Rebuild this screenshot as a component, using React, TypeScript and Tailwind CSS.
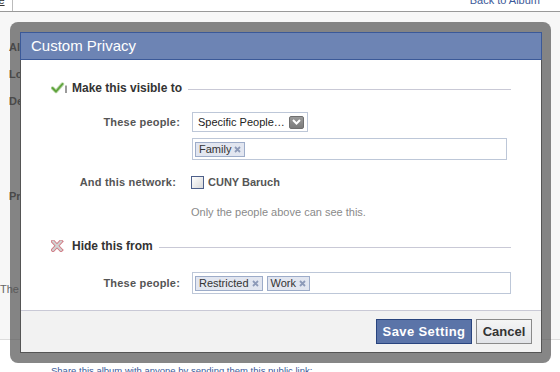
import React from "react";

const CheckIcon = () => (
  <svg width="18" height="12" viewBox="0 0 18 12" className="shrink-0">
    <path d="M1.5 6 L5 9.5 L11.5 2" fill="none" stroke="#b9d6a8" strokeWidth="3.5" strokeLinecap="round" strokeLinejoin="round" />
    <path d="M1.5 6 L5 9.5 L11.5 2" fill="none" stroke="#5ea33b" strokeWidth="1.8" strokeLinecap="round" strokeLinejoin="round" />
    <rect x="14" y="4" width="2" height="7" fill="#9a9a9a" />
    <rect x="14" y="3" width="2" height="1" fill="#cfcfcf" />
  </svg>
);

const CrossIcon = () => (
  <svg width="18" height="12" viewBox="0 0 18 12" className="shrink-0">
    <path d="M2 1.5 L10 10 M10 1.5 L2 10" fill="none" stroke="#d27a84" strokeWidth="4" strokeLinecap="square" />
    <path d="M2 1.5 L10 10 M10 1.5 L2 10" fill="none" stroke="#d2d2d2" strokeWidth="2" strokeLinecap="square" />
  </svg>
);

const TokenX = () => (
  <svg width="7" height="7" viewBox="0 0 7 7" className="shrink-0">
    <path d="M1 1 L6 6 M6 1 L1 6" stroke="#8d9ab8" strokeWidth="1.8" />
  </svg>
);

const Token = ({ label }: { label: string }) => (
  <div className="flex h-[15px] items-center gap-[3px] border border-[#9dacc9] bg-[#e2e6f0] pl-[3px] pr-[3px] leading-[13px] text-[#333]">
    <span>{label}</span>
    <TokenX />
  </div>
);

const Heading = ({ icon, text }: { icon: React.ReactNode; text: string }) => (
  <div className="flex h-[16px] items-center">
    <div className="w-[21px]">{icon}</div>
    <div className="text-[12px] font-bold text-[#333]">{text}</div>
    <div className="ml-[6px] mt-[2px] h-px flex-1 bg-[#c9c9d6]" />
  </div>
);

const Label = ({ children, extra = "" }: { children: React.ReactNode; extra?: string }) => (
  <div className={`w-[129px] shrink-0 text-right font-bold tracking-[0.2px] text-[#555] ${extra}`}>{children}</div>
);

const App = () => {
  return (
    <div className="relative h-[372px] w-[560px] overflow-hidden bg-white font-['Liberation_Sans',Arial,sans-serif] text-[11px]">
      {/* page behind the dialog */}
      <div className="flex h-[12px] justify-between border-b border-[#999]">
        <div className="w-[13px] overflow-hidden border-r border-[#bbb]">
          <span className="-ml-[4px] block -translate-y-[8px] text-[#333] underline">le</span>
        </div>
        <div className="pr-[20px]">
          <span className="block -translate-y-[8px] text-[#3b5998]">Back to Album</span>
        </div>
      </div>
      <div className="flex h-[327px] bg-[#f7f7f7]">
        <div className="flex w-[20px] flex-col overflow-hidden whitespace-nowrap leading-[13px]">
          <div className="ml-[9px] mt-[29px] font-bold text-[#333]">Al</div>
          <div className="ml-[9px] mt-[14px] font-bold text-[#333]">Lo</div>
          <div className="ml-[9px] mt-[14px] font-bold text-[#333]">De</div>
          <div className="ml-[9px] mt-[82px] font-bold text-[#333]">Pr</div>
          <div className="mt-[80px] text-[#666]">The f</div>
        </div>
      </div>
      <div className="border-t border-[#ddd] pl-[51px] pt-[24px] text-[9.5px] leading-[13px] text-[#3b5998]">
        Share this album with anyone by sending them this public link:
      </div>

      {/* dialog overlay */}
      <div className="absolute left-[10px] top-[22px] h-[341px] w-[541px] rounded-[8px] bg-[rgba(82,82,82,0.7)] py-[10px] pl-[10px] pr-[9px]">
        <div className="flex h-full flex-col border-x border-b border-[#555] bg-white">
          <div className="-mx-px flex h-[28px] shrink-0 items-center border border-[#3b5998] bg-[#6d84b4] pl-[10px] text-[15px] text-white">
            Custom Privacy
          </div>

          <div className="flex flex-1 flex-col px-[30px] pt-[20px] leading-[13px]">
            <Heading icon={<CheckIcon />} text="Make this visible to" />

            <div className="mt-[16px] flex items-center">
              <Label>These people:</Label>
              <div className="ml-[12px] flex h-[20px] w-[116px] items-center justify-between border border-[#bdc7d8] pl-[5px] pr-[3px] text-[#222]">
                <span>Specific People…</span>
                <div className="flex h-[13px] w-[15px] items-center justify-center rounded-[2px] border border-[#6f6f6f] bg-linear-to-b from-[#9a9a9a] to-[#7b7b7b]">
                  <svg width="9" height="6" viewBox="0 0 9 6">
                    <path d="M1 1 L4.5 4.5 L8 1" fill="none" stroke="#fff" strokeWidth="2" />
                  </svg>
                </div>
              </div>
            </div>

            <div className="ml-[141px] mt-[6px] flex h-[22px] w-[315px] items-center border border-[#bdc7d8] pl-[2px]">
              <Token label="Family" />
            </div>

            <div className="mt-[16px] flex h-[13px] items-center">
              <Label extra="pr-[4px]">And this network:</Label>
              <div className="ml-[11px] h-[13px] w-[13px] border border-[#4d5f8a] bg-linear-to-br from-white to-[#d8d8d8]" />
              <span className="ml-[4px] font-bold text-[#555]">CUNY Baruch</span>
            </div>

            <div className="ml-[140px] mt-[17px] text-[#8a8a8a]">Only the people above can see this.</div>

            <div className="mt-[19px]">
              <Heading icon={<CrossIcon />} text="Hide this from" />
            </div>

            <div className="mt-[18px] flex items-center">
              <Label>These people:</Label>
              <div className="ml-[12px] flex h-[22px] flex-1 items-center gap-[4px] border border-[#bdc7d8] pl-[2px]">
                <Token label="Restricted" />
                <Token label="Work" />
              </div>
            </div>
          </div>

          <div className="flex h-[42px] shrink-0 items-start justify-end gap-[4px] border-t border-[#c9c9d6] bg-[#f2f2f2] pr-[9px] pt-[8px]">
            <button className="h-[25px] w-[96px] border border-[#29447e] bg-[#5b74a8] text-center text-[13px] font-bold tracking-[0.4px] text-white">
              Save Setting
            </button>
            <button className="h-[25px] w-[56px] border border-[#8a8a8a] bg-linear-to-b from-[#f5f5f5] to-[#e2e4e8] text-center text-[13px] font-bold text-[#333]">
              Cancel
            </button>
          </div>
        </div>
      </div>
    </div>
  );
};

export default App;
